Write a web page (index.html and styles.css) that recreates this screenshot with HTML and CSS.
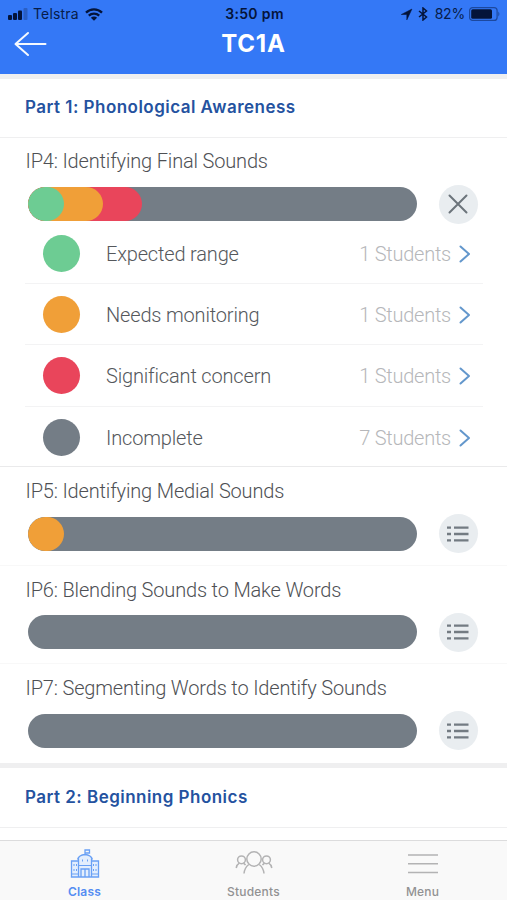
FILE: index.html
```html
<!DOCTYPE html>
<html lang="en">
<head>
<meta charset="utf-8">
<title>TC1A</title>
<link rel="stylesheet" href="styles.css">
</head>
<body>
<svg class="defs" aria-hidden="true">
  <symbol id="chevron" viewBox="0 0 12 18"><path d="M1.500 1.500 10 9l-8.500 7.500"/></symbol>
  <symbol id="list" viewBox="0 0 24 20"><path d="M1 3.700h4M1 10h4M1 16.300h4M8 3.700H22.500M8 10H22.500M8 16.300H22.500"/></symbol>
</svg>
<div class="app">
  <header class="header">
    <div class="status">
      <div class="status-left">
        <svg class="signal" viewBox="0 0 20 12"><rect x="0" y="7" width="4" height="5" rx="1"/><rect x="5" y="5" width="4" height="7" rx="1"/><rect x="10" y="2.500" width="4" height="9.500" rx="1"/><rect class="dim" x="15.500" y="0" width="4" height="12" rx="1"/></svg>
        <span class="carrier">Telstra</span>
        <svg class="wifi" viewBox="0 0 18 13"><path d="M1 4.700a11.500 11.500 0 0 1 16 0M3.800 7.700a7.500 7.500 0 0 1 10.400 0"/><path class="solid" d="M9 12.700 5.900 9.700a4.400 4.400 0 0 1 6.200 0z"/></svg>
      </div>
      <span class="time">3:50 pm</span>
      <div class="status-right">
        <svg class="locate" viewBox="0 0 12 12"><path d="M1.200 6 11 1 6.300 11V6z"/></svg>
        <svg class="bluetooth" viewBox="0 0 10 14"><path d="m1 4 7.500 6L5 13V1l3.500 3L1 10"/></svg>
        <span class="percent">82%</span>
        <svg class="battery" viewBox="0 0 32 14"><rect class="shell" x=".6" y=".6" width="27.500" height="12.800" rx="3"/><rect x="2.200" y="2.300" width="20.800" height="9.400" rx="1.500"/><path class="tip" d="M29.300 4.500q2.200 2.500 0 5z"/></svg>
      </div>
    </div>
    <div class="nav">
      <svg class="back" viewBox="0 0 33 26"><path d="M31.500 13H2M14 2 1.500 13 14 24"/></svg>
      <h1 class="title">TC1A</h1>
    </div>
  </header>
  <main class="content">
    <h2 class="section first">Part 1: Phonological Awareness</h2>
    <section class="item open">
      <h3 class="name">IP4: Identifying Final Sounds</h3>
      <div class="line">
        <div class="bar"><i class="seg red"></i><i class="seg orange"></i><i class="seg green"></i></div>
        <button class="round" aria-label="Close"><svg class="cross" viewBox="0 0 20 20"><path d="m1.500 1.500 17 17M18.500 1.500l-17 17"/></svg></button>
      </div>
      <ul class="levels">
        <li class="level"><i class="dot green"></i><span class="label">Expected range</span><span class="count">1 Students</span><svg class="chev"><use href="#chevron"/></svg></li>
        <li class="level"><i class="dot orange"></i><span class="label">Needs monitoring</span><span class="count">1 Students</span><svg class="chev"><use href="#chevron"/></svg></li>
        <li class="level"><i class="dot red"></i><span class="label">Significant concern</span><span class="count">1 Students</span><svg class="chev"><use href="#chevron"/></svg></li>
        <li class="level"><i class="dot gray"></i><span class="label">Incomplete</span><span class="count">7 Students</span><svg class="chev"><use href="#chevron"/></svg></li>
      </ul>
    </section>
    <section class="item">
      <h3 class="name">IP5: Identifying Medial Sounds</h3>
      <div class="line">
        <div class="bar"><i class="seg orange single"></i></div>
        <button class="round" aria-label="Details"><svg class="list"><use href="#list"/></svg></button>
      </div>
    </section>
    <section class="item">
      <h3 class="name">IP6: Blending Sounds to Make Words</h3>
      <div class="line">
        <div class="bar"></div>
        <button class="round" aria-label="Details"><svg class="list"><use href="#list"/></svg></button>
      </div>
    </section>
    <section class="item last">
      <h3 class="name">IP7: Segmenting Words to Identify Sounds</h3>
      <div class="line">
        <div class="bar"></div>
        <button class="round" aria-label="Details"><svg class="list"><use href="#list"/></svg></button>
      </div>
    </section>
    <h2 class="section second">Part 2: Beginning Phonics</h2>
  </main>
  <nav class="tabs">
    <a class="tab active">
      <svg class="tab-icon school" viewBox="0 0 30 30"><path class="tint" d="M1 12h8V9q6-6 12 0v3h8v16H1z"/><path d="M.8 28h28.400M1.500 28V12H8.500M21.500 12h7V28M8.500 28V9.500M21.500 9.500V28M7.500 10.500q1.500-4.500 7.500-5 6 .5 7.500 5M15 5.500V1h4.500v3H15M11 28v-8h8v8M15 20v8"/><path class="detail" d="M9 16.500h12M4 15v2M4 20v2M6.500 15v2M6.500 20v2M23.500 15v2M23.500 20v2M26 15v2M26 20v2M12.500 10.500v2M17.500 10.500v2M2 25h6.500M21.500 25H28"/></svg>
      <span class="tab-text">Class</span>
    </a>
    <a class="tab">
      <svg class="tab-icon people" viewBox="0 0 38 25"><circle cx="19" cy="9" r="7.200"/><circle cx="6.500" cy="9.800" r="3.900"/><circle cx="31.500" cy="9.800" r="3.900"/><path d="M13.800 14.500Q9.700 17.500 9 23.500M24.200 14.500q4.100 3 4.800 9M4.300 13.200Q1.800 14.500 1.200 18M8.500 13.200q1.300.6 2 2M33.700 13.200q2.500 1.300 3.100 4.800M29.500 13.200q-1.300.6-2 2"/></svg>
      <span class="tab-text">Students</span>
    </a>
    <a class="tab">
      <svg class="tab-icon menu" viewBox="0 0 30 20"><path d="M0 1h30M0 9.700h30M0 18.400h30"/></svg>
      <span class="tab-text">Menu</span>
    </a>
  </nav>
</div>
</body>
</html>
```
FILE: styles.css
```css
* { box-sizing: border-box; }
body { margin: 0; background: #fff; font-family: Roboto, "Liberation Sans", sans-serif; }
h1, h2, h3, ul { margin: 0; padding: 0; font-weight: normal; }
svg { display: block; flex: none; fill: none; }
.defs { width: 0; height: 0; position: absolute; }
.app { width: 507px; height: 900px; display: flex; flex-direction: column; overflow: hidden; }

.header { height: 74px; flex: none; background: #3478f6; }
.status { height: 27px; padding: 1px 6px 0 8px; display: grid; grid-template-columns: 1fr auto 1fr; align-items: center; font: 14px/26px Inter, sans-serif; color: #071c49; }
.status-left, .status-right { display: flex; align-items: center; }
.status-right { justify-content: flex-end; }
.status svg { fill: #04143a; }
.signal { width: 20px; height: 12px; }
.signal .dim { fill: #2a5fc4; }
.carrier { margin-left: 5px; width: 46px; white-space: nowrap; letter-spacing: .15px; }
.wifi { width: 18px; height: 13px; margin-left: 6px; }
.wifi path { fill: none; stroke: #04143a; stroke-width: 2.300; }
.wifi .solid { fill: #04143a; stroke: none; }
.time { font-weight: 600; color: #04143a; letter-spacing: .35px; }
.locate { width: 13px; height: 13px; margin-right: 5px; }
.status .locate { stroke: #04143a; stroke-width: .5; }
.status .bluetooth { width: 10px; height: 14px; fill: none; stroke: #04143a; stroke-width: 1.500; margin-right: 7px; }
.percent { margin-right: 4px; letter-spacing: -.2px; }
.battery { width: 32px; height: 14px; }
.status .shell { fill: none; stroke: #1c489e; stroke-width: 1.200; }
.status .tip { fill: #1c489e; }
.nav { height: 47px; display: grid; grid-template-columns: 1fr auto 1fr; padding: 0 14px; }
.back { width: 33px; height: 26px; margin-top: 4px; stroke: #f5f9ff; stroke-width: 2; stroke-linecap: round; stroke-linejoin: round; }
.title { font: bold 24px/34px Inter, sans-serif; color: #fff; letter-spacing: .8px; }

.content { flex: 1; min-height: 0; overflow: hidden; }
.section { border-top: 5px solid #efeff0; border-bottom: 1px solid #efeff0; padding-left: 25px; font: 600 17px/57px Inter, sans-serif; letter-spacing: .47px; color: #24529f; white-space: nowrap; }
.section.first { height: 64px; }
.section.second { height: 65px; line-height: 58px; }
.item { height: 98.500px; padding: 11px 24px 0 27px; border-bottom: 1px solid #f8f8f8; }
.item.open { height: 329px; padding-top: 10px; border-color: #eaeaeb; }
.item.last { border: 0; }
.name { height: 27px; margin-left: -1.500px; font-weight: 300; font-size: 20px; line-height: 27px; letter-spacing: -.17px; color: #4e5054; white-space: nowrap; }
.line { height: 46px; padding-top: 11px; display: flex; align-items: center; gap: 22px; }
.open .line { padding-top: 12px; }
.bar { width: 389px; height: 34px; margin-left: .5px; border-radius: 17px; background: #747d86; display: grid; overflow: hidden; }
.seg { grid-area: 1 / 1; height: 34px; border-radius: 18px; }
.seg.green { width: 36px; }
.seg.orange { width: 75px; }
.seg.orange.single { width: 36px; }
.seg.red { width: 114px; }
.green { background: #6dcc93; }
.orange { background: #f09f38; }
.red { background: #e9455b; }
.gray { background: #747d86; }
.round { width: 39px; height: 39px; flex: none; border: 0; padding: 0; border-radius: 50%; background: #e9edf0; display: grid; place-items: center; }
.cross { width: 20px; height: 20px; stroke: #6c747b; stroke-width: 2; stroke-linecap: round; }
.list { width: 24px; height: 20px; margin-left: -1px; stroke: #737b82; stroke-width: 2.300; }

.levels { list-style: none; margin-top: 2px; margin-left: -2px; }
.level { height: 61.200px; padding: 1px 12px 0 18px; border-bottom: 1px solid #f3f3f4; display: flex; align-items: center; font-weight: 300; font-size: 20px; letter-spacing: -.17px; white-space: nowrap; color: #55585c; }
.level:last-child { border: 0; }
.dot { width: 37px; height: 37px; border-radius: 50%; margin-right: 26px; }
.label { flex: 1; padding-top: 1px; }
.count { padding-top: 1px; color: #b6b7ba; letter-spacing: -.25px; }
.chev { width: 12px; height: 18px; margin-left: 8px; stroke: #6397cc; stroke-width: 2; stroke-linecap: round; stroke-linejoin: round; }

.tabs { height: 60px; flex: none; border-top: 1px solid #dcdcdd; background: #f9f9f9; display: grid; grid-template-columns: repeat(3, 1fr); }
.tab { display: flex; flex-direction: column; align-items: center; color: #929293; }
.tab-icon { stroke: #b3b3b4; stroke-width: 1.500; }
.school { width: 30px; height: 30px; margin-top: 8px; stroke: #69a0f5; stroke-width: 1.300; }
.school .tint { fill: #e3eefd; stroke: none; }
.school .detail { stroke-width: 1; }
.people { width: 38px; height: 25px; margin-top: 9px; margin-bottom: 4px; }
.menu { width: 30px; height: 20px; margin-top: 13px; margin-bottom: 5px; }
.tab-text { font: 500 12px/16px Inter, sans-serif; margin-top: 5px; letter-spacing: .2px; }
.active { color: #558df2; }
.active .tab-text { font-weight: 600; }
```
